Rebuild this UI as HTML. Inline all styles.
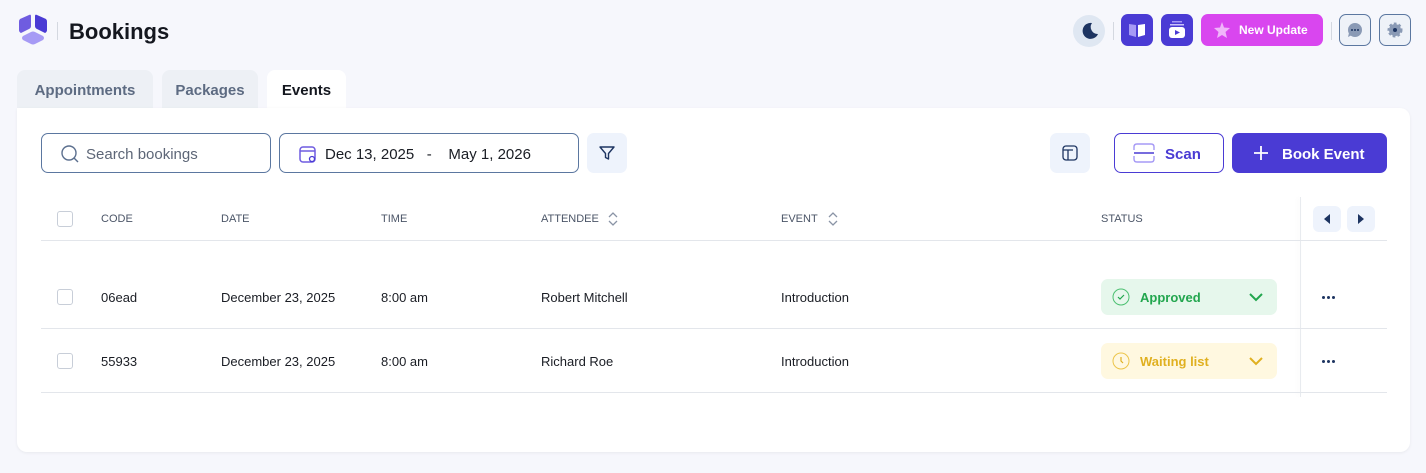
<!DOCTYPE html>
<html><head><style>
*{box-sizing:border-box;margin:0;padding:0}
body{width:1426px;height:473px;background:#f6f7fc;font-family:"Liberation Sans",sans-serif;position:relative;overflow:hidden;color:#1a1d24}
.a{position:absolute}
.tab{position:absolute;top:70px;height:40px;border-radius:8px 8px 0 0;background:#edf0f5;color:#5d6b82;font-size:15px;font-weight:bold;display:flex;align-items:center;justify-content:center}
.card{position:absolute;left:17px;top:108px;width:1393px;height:344px;background:#fff;border-radius:0 10px 10px 10px;box-shadow:0 1px 3px rgba(0,0,0,.06)}
.hd{position:absolute;top:213px;font-size:11px;color:#4b5567}
.cell{position:absolute;font-size:13px;color:#1a1d24}
.cb{position:absolute;left:57px;width:16px;height:16px;border:1px solid #c8ced8;border-radius:3px}
.line{position:absolute;left:41px;width:1346px;height:1px;background:#e3e6eb}
.ib{position:absolute;width:32px;height:32px;border-radius:7px}
.dots{position:absolute;left:1321px;width:16px;height:4px}
.dots i{position:absolute;top:0;width:3px;height:3px;border-radius:50%;background:#1d3461}
</style></head><body>
<svg class="a" style="left:17px;top:13px" width="32" height="34" viewBox="0 0 32 34"><path d="M3 6 Q2 7 2 9 L2 17 Q2 19 4 20 L12 16 Q14 15 14 13 L14 3 Q14 1 12 2Z" fill="#6f5ce0"/><path d="M29 6 Q30 7 30 9 L30 17 Q30 19 28 20 L20 16 Q18 15 18 13 L18 3 Q18 1 20 2Z" fill="#4a3bd4"/><path d="M6 23 L14 19 Q16 18 18 19 L26 23 Q28 25 26 27 L18 31 Q16 32 14 31 L6 27 Q4 25 6 23Z" fill="#a69af5"/></svg>
<div class="a" style="left:57px;top:22px;width:1px;height:18px;background:#d4d8e0"></div>
<div class="a" style="left:69px;top:19px;font-size:22px;font-weight:bold;color:#14171f">Bookings</div>

<div class="a" style="left:1073px;top:15px;width:32px;height:32px;border-radius:50%;background:#dfe7f2"></div>
<svg class="a" style="left:1080px;top:21px" width="20" height="20" viewBox="0 0 20 20"><path d="M12 2 A8 8 0 1 0 18 13 A7 7 0 0 1 12 2Z" fill="#1d3461"/></svg>
<div class="a" style="left:1113px;top:22px;width:1px;height:18px;background:#d4d8e0"></div>
<div class="ib" style="left:1121px;top:14px;background:#4a3bd4"></div>
<svg class="a" style="left:1128px;top:21px" width="18" height="18" viewBox="0 0 18 18"><path d="M1 3 L8 4 L8 16 L1 14Z" fill="#a69af5"/><path d="M10 4 L17 3 L17 14 L10 16Z" fill="#fff"/></svg>
<div class="ib" style="left:1161px;top:14px;background:#4a3bd4"></div>
<svg class="a" style="left:1168px;top:20px" width="18" height="20" viewBox="0 0 18 20"><rect x="4" y="1" width="10" height="1.5" fill="#a69af5"/><rect x="2" y="4" width="14" height="1.5" fill="#c9c2fa"/><rect x="1" y="7" width="16" height="11" rx="3" fill="#fff"/><path d="M7 10 L12 12.5 L7 15Z" fill="#4a3bd4"/></svg>
<div class="a" style="left:1201px;top:14px;width:122px;height:32px;border-radius:7px;background:#d946ef;color:#fff;font-size:12px;font-weight:bold;padding-left:38px;line-height:33px">New Update</div>
<svg class="a" style="left:1213px;top:21px" width="18" height="18" viewBox="0 0 18 18"><path d="M9 1 L11 6.5 L17 7 L12.5 11 L14 17 L9 14 L4 17 L5.5 11 L1 7 L7 6.5Z" fill="#f0b6fa"/></svg>
<div class="a" style="left:1331px;top:22px;width:1px;height:18px;background:#d4d8e0"></div>
<div class="ib" style="left:1339px;top:14px;border:1px solid #5b77a0;background:#eef2f8"></div>
<svg class="a" style="left:1346px;top:21px" width="18" height="18" viewBox="0 0 18 18"><circle cx="9" cy="9" r="7" fill="#8a9ab5"/><path d="M3 12 L2 16 L6 14Z" fill="#8a9ab5"/><circle cx="6" cy="9" r="1" fill="#1d3461"/><circle cx="9" cy="9" r="1" fill="#1d3461"/><circle cx="12" cy="9" r="1" fill="#1d3461"/></svg>
<div class="ib" style="left:1379px;top:14px;border:1px solid #5b77a0;background:#eef2f8"></div>
<svg class="a" style="left:1386px;top:21px" width="18" height="18" viewBox="0 0 18 18"><circle cx="9" cy="9" r="6" fill="#8a9ab5" stroke="#8a9ab5" stroke-width="3" stroke-dasharray="2.5 2"/><circle cx="9" cy="9" r="2" fill="#1d3461"/></svg>

<div class="tab" style="left:17px;width:136px">Appointments</div>
<div class="tab" style="left:162px;width:96px">Packages</div>
<div class="tab" style="left:267px;width:79px;background:#fff;color:#14171f">Events</div>
<div class="card"></div>

<div class="a" style="left:41px;top:133px;width:230px;height:40px;border:1px solid #5b77a0;border-radius:7px"></div>
<svg class="a" style="left:60px;top:144px" width="20" height="20" viewBox="0 0 20 20"><circle cx="9" cy="9" r="7" fill="none" stroke="#5b6f8e" stroke-width="1.4"/><path d="M14 14 L18 18" stroke="#5b6f8e" stroke-width="1.4"/></svg>
<div class="a" style="left:86px;top:146px;font-size:15px;color:#5d6677">Search bookings</div>
<div class="a" style="left:279px;top:133px;width:300px;height:40px;border:1px solid #5b77a0;border-radius:7px"></div>
<svg class="a" style="left:298px;top:144px" width="20" height="20" viewBox="0 0 20 20"><rect x="2" y="3" width="15" height="15" rx="3" fill="none" stroke="#6f5ce0" stroke-width="1.5"/><path d="M2 7 H17" stroke="#6f5ce0" stroke-width="1.5"/><circle cx="14" cy="15" r="2.5" fill="#fff" stroke="#4a3bd4" stroke-width="1.3"/></svg>
<div class="a" style="left:325px;top:146px;font-size:15px;color:#1a1d24">Dec 13, 2025 &nbsp;&nbsp;- &nbsp;&nbsp; May 1, 2026</div>
<div class="a" style="left:587px;top:133px;width:40px;height:40px;border-radius:7px;background:#eef3fc"></div>
<svg class="a" style="left:597px;top:143px" width="20" height="20" viewBox="0 0 20 20"><path d="M3 4 H17 L11.5 10.5 V16 L8.5 14.5 V10.5Z" fill="none" stroke="#1d3461" stroke-width="1.4" stroke-linejoin="round"/></svg>

<div class="a" style="left:1050px;top:133px;width:40px;height:40px;border-radius:7px;background:#eef3fc"></div>
<svg class="a" style="left:1061px;top:144px" width="18" height="18" viewBox="0 0 18 18"><rect x="2" y="2" width="14" height="14" rx="3" fill="none" stroke="#1d3461" stroke-width="1.3"/><path d="M2 6 H12 M7 6 V16" stroke="#1d3461" stroke-width="1.3"/></svg>
<div class="a" style="left:1114px;top:133px;width:110px;height:40px;border:1px solid #4a3bd4;border-radius:7px;font-size:15px;font-weight:bold;color:#4a3bd4;line-height:42px;padding-left:50px">Scan</div>
<svg class="a" style="left:1133px;top:143px" width="22" height="20" viewBox="0 0 22 20"><path d="M1 7 V4 Q1 1 4 1 H18 Q21 1 21 4 V7 M1 13 V16 Q1 19 4 19 H18 Q21 19 21 16 V13" fill="none" stroke="#a69af5" stroke-width="1.4"/><path d="M1 10 H21" stroke="#4a3bd4" stroke-width="1.4"/></svg>
<div class="a" style="left:1232px;top:133px;width:155px;height:40px;background:#4a3bd4;border-radius:7px;font-size:15px;font-weight:bold;color:#fff;line-height:43px;padding-left:50px">Book Event</div>
<svg class="a" style="left:1253px;top:145px" width="16" height="16" viewBox="0 0 16 16"><path d="M8 1 V15 M1 8 H15" stroke="#fff" stroke-width="1.8"/></svg>

<div class="cb" style="top:211px"></div>
<div class="hd" style="left:101px">CODE</div>
<div class="hd" style="left:221px">DATE</div>
<div class="hd" style="left:381px">TIME</div>
<div class="hd" style="left:541px">ATTENDEE</div>
<div class="hd" style="left:781px">EVENT</div>
<svg class="a" style="left:607px;top:210px" width="12" height="18" viewBox="0 0 12 18"><path d="M2 7 L6 3 L10 7 M2 11 L6 15 L10 11" fill="none" stroke="#8a94a6" stroke-width="1.3"/></svg>
<svg class="a" style="left:827px;top:210px" width="12" height="18" viewBox="0 0 12 18"><path d="M2 7 L6 3 L10 7 M2 11 L6 15 L10 11" fill="none" stroke="#8a94a6" stroke-width="1.3"/></svg>
<div class="hd" style="left:1101px">STATUS</div>
<div class="a" style="left:1300px;top:197px;width:1px;height:200px;background:#e8ebef;box-shadow:-2px 0 4px rgba(0,0,0,.05)"></div>
<div class="a" style="left:1313px;top:206px;width:28px;height:26px;border-radius:6px;background:#eef3fc"></div>
<div class="a" style="left:1347px;top:206px;width:28px;height:26px;border-radius:6px;background:#eef3fc"></div>
<svg class="a" style="left:1313px;top:206px" width="62" height="26" viewBox="0 0 62 26"><path d="M17 8 L11 13 L17 18Z M45 8 L51 13 L45 18Z" fill="#1d3461"/></svg>
<div class="line" style="top:240px"></div>

<div class="cb" style="top:289px"></div>
<div class="cell" style="left:101px;top:290px">06ead</div>
<div class="cell" style="left:221px;top:290px">December 23, 2025</div>
<div class="cell" style="left:381px;top:290px">8:00 am</div>
<div class="cell" style="left:541px;top:290px">Robert Mitchell</div>
<div class="cell" style="left:781px;top:290px">Introduction</div>
<div class="a" style="left:1101px;top:279px;width:176px;height:36px;border-radius:7px;background:#e6f7ec;color:#22a64e;font-size:13px;font-weight:bold;line-height:37px;padding-left:39px">Approved</div>
<svg class="a" style="left:1112px;top:288px" width="18" height="18" viewBox="0 0 18 18"><circle cx="9" cy="9" r="8" fill="none" stroke="#4cc071" stroke-width="1"/><path d="M6 9 L8 11 L12 7" fill="none" stroke="#22a64e" stroke-width="1.2"/></svg>
<svg class="a" style="left:1249px;top:292px" width="14" height="10" viewBox="0 0 14 10"><path d="M1 2 L7 8 L13 2" fill="none" stroke="#22a64e" stroke-width="2"/></svg>
<div class="dots" style="top:296px"><i style="left:1px"></i><i style="left:6px"></i><i style="left:11px"></i></div>
<div class="line" style="top:328px"></div>

<div class="cb" style="top:353px"></div>
<div class="cell" style="left:101px;top:354px">55933</div>
<div class="cell" style="left:221px;top:354px">December 23, 2025</div>
<div class="cell" style="left:381px;top:354px">8:00 am</div>
<div class="cell" style="left:541px;top:354px">Richard Roe</div>
<div class="cell" style="left:781px;top:354px">Introduction</div>
<div class="a" style="left:1101px;top:343px;width:176px;height:36px;border-radius:7px;background:#fff8e0;color:#e0b020;font-size:13px;font-weight:bold;line-height:37px;padding-left:39px">Waiting list</div>
<svg class="a" style="left:1112px;top:352px" width="18" height="18" viewBox="0 0 18 18"><circle cx="9" cy="9" r="8" fill="none" stroke="#ecc54a" stroke-width="1"/><path d="M9 5 V9 L11 11" fill="none" stroke="#e0b020" stroke-width="1.2"/></svg>
<svg class="a" style="left:1249px;top:356px" width="14" height="10" viewBox="0 0 14 10"><path d="M1 2 L7 8 L13 2" fill="none" stroke="#e0b020" stroke-width="2"/></svg>
<div class="dots" style="top:360px"><i style="left:1px"></i><i style="left:6px"></i><i style="left:11px"></i></div>
<div class="line" style="top:392px"></div>
</body></html>
